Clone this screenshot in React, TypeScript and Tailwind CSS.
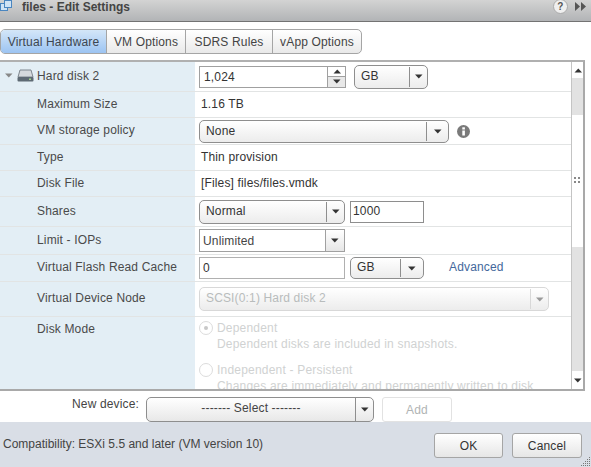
function Caret({ className = "", color = "#333" }: { className?: string; color?: string }) {
  return (
    <svg width="8" height="5" viewBox="0 0 8 5" className={className}>
      <path d="M0 0.5H7.5L3.75 4.5Z" fill={color} />
    </svg>
  );
}
function Select({ w, text, arrow, disabled, h = "h-[24px]", leading = "leading-[20px]" }: { w: string; text: string; arrow: string; disabled?: boolean; h?: string; leading?: string }) {
  return (
    <div className={`flex ${w} ${h} rounded-[5px] border ${disabled ? "border-[#d8d8d8] text-[#b8bcbc]" : "border-[#8e8e8e] text-[#333]"} bg-gradient-to-b from-white to-[#ececec]`}>
      <div className={`flex-1 min-w-0 pl-[6px] ${leading} whitespace-nowrap`}>{text}</div>
      <div className={`${arrow} my-[1px] flex items-center justify-center border-l ${disabled ? "border-[#d8d8d8]" : "border-[#8e8e8e]"}`}>
        <Caret color={disabled ? "#999" : "#333"} />
      </div>
    </div>
  );
}
function Row({ h, label, children, labelClass = "" }: { h: string; label: React.ReactNode; children?: React.ReactNode; labelClass?: string }) {
  return (
    <div className={`flex ${h} border-b border-[#e2e4e4] shrink-0`}>
      <div className={`w-[195px] shrink-0 bg-[#e3eef5] pl-[37px] text-[#4a4a4a] flex items-center ${labelClass}`}>{label}</div>
      <div className="flex-1 min-w-0 pl-[4px] flex items-center text-[#333]">{children}</div>
    </div>
  );
}
export default function App() {
  return (
    <div className="w-[591px] h-[467px] bg-white overflow-hidden flex flex-col text-[12px] leading-[14px] tracking-[0.15px]" style={{ fontFamily: '"Liberation Sans", Arial, sans-serif' }}>
      {/* Title bar */}
      <div className="h-[22px] shrink-0 flex items-center bg-gradient-to-b from-[#d3d3d3] to-[#b2b4b6] border-b border-[#737373]">
        <svg width="13" height="14" viewBox="0 0 13 14" className="mb-[8px] shrink-0">
          <rect x="0.5" y="3.5" width="7" height="7" fill="#cfe3f5" stroke="#4a86c0" />
          <rect x="4.5" y="0.5" width="7" height="7" fill="#cfe3f5" stroke="#4a86c0" />
        </svg>
        <div className="ml-[9px] mb-[8px] text-[12px] font-bold text-[#444] tracking-normal">files - Edit Settings</div>
        <div className="ml-auto mb-[8px] flex items-center mr-[4px] gap-[7px]">
          <div className="w-[15px] h-[15px] rounded-full bg-[#efefef] border border-[#aaa] text-[10px] font-bold text-[#555] flex items-center justify-center">?</div>
          <svg width="12" height="9" viewBox="0 0 12 9"><path d="M0 0L5 4.5L0 9ZM6 0L11 4.5L6 9Z" fill="#555" /></svg>
        </div>
      </div>
      {/* Tabs */}
      <div className="h-[38px] shrink-0 pt-[7px] flex">
        <div className="flex h-[25px] border border-[#a5a5a5] rounded-[5px] overflow-hidden text-[#444] bg-gradient-to-b from-white to-[#e9e9e9]">
          <div className="w-[106px] flex items-center justify-center bg-gradient-to-b from-[#d4e6f8] to-[#9cc4f2] border-r border-[#a5a5a5] text-[#3c4650]">Virtual Hardware</div>
          <div className="w-[79px] flex items-center justify-center border-r border-[#a5a5a5]">VM Options</div>
          <div className="w-[87px] flex items-center justify-center border-r border-[#a5a5a5]">SDRS Rules</div>
          <div className="w-[88px] flex items-center justify-center">vApp Options</div>
        </div>
      </div>
      {/* Panel */}
      <div className="h-[331px] shrink-0 w-[585px] border-y-2 border-r-[2px] border-[#a9a9a9] border-t-[#b0b0b0] flex box-border">
        <div className="flex-1 min-w-0 flex flex-col overflow-hidden">
          <Row
            h="h-[30px]"
            labelClass="relative pb-[1px]"
            label={
              <>
                <div className="absolute left-[5px] top-[11px] flex"><Caret color="#888" /></div>
                <div className="absolute left-[17px] top-[7px] flex">
                  <svg width="17" height="13" viewBox="0 0 17 13">
                    <path d="M3 1H14L16 8H1Z" fill="#d5d9dd" stroke="#7d868e" />
                    <rect x="0.5" y="8" width="16" height="4.5" rx="1" fill="#5e6a74" />
                    <rect x="12" y="9.5" width="2" height="1.5" fill="#9fd08a" />
                  </svg>
                </div>
                Hard disk 2
              </>
            }
          >
            <div className="flex h-[22px] w-[147px] border border-[#a0a0a0] items-center pl-[4px]">
              <span className="flex-1">1,024</span>
              <div className="w-[18px] h-full border-l border-[#a0a0a0] flex flex-col">
                <div className="flex-1 flex items-center justify-center border-b border-[#a0a0a0]"><Caret className="rotate-180" /></div>
                <div className="flex-1 flex items-center justify-center bg-[#e8e8e8]"><Caret /></div>
              </div>
            </div>
            <div className="ml-[8px]"><Select w="w-[74px]" text="GB" arrow="w-[18px]" /></div>
          </Row>
          <Row h="h-[26px]" label="Maximum Size" labelClass="pb-[2px]"><span className="ml-[2px] mb-[2px]">1.16 TB</span></Row>
          <Row h="h-[27px]" label="VM storage policy" labelClass="pb-[3px]">
            <Select w="w-[250px]" h="h-[23px]" text="None" arrow="w-[22px]" />
            <svg width="15" height="15" viewBox="0 0 15 15" className="ml-[7px]">
              <circle cx="7.5" cy="7.5" r="6.5" fill="#7a7a7a" />
              <rect x="6.3" y="6.5" width="2.6" height="5" fill="#fff" />
              <rect x="6.3" y="3.3" width="2.6" height="2.2" fill="#fff" />
            </svg>
          </Row>
          <Row h="h-[26px]" label="Type" labelClass="pb-[2px]"><span className="ml-[2px] mb-[2px]">Thin provision</span></Row>
          <Row h="h-[26px]" label="Disk File" labelClass="pb-[2px]"><span className="ml-[2px] mb-[2px]">[Files] files/files.vmdk</span></Row>
          <Row h="h-[30px]" label="Shares" labelClass="pb-[2px]">
            <Select w="w-[146px]" text="Normal" arrow="w-[18px]" />
            <div className="ml-[5px] w-[74px] h-[22px] border border-[#8e8e8e] pl-[2px] pb-[2px] flex items-center">1000</div>
          </Row>
          <Row h="h-[28px]" label="Limit - IOPs" labelClass="pb-[2px]">
            <div className="flex w-[146px] h-[23px] border border-[#a0a0a0] items-center pl-[3px]">
              <span className="flex-1 text-[#444]">Unlimited</span>
              <div className="w-[19px] h-full border-l border-[#a0a0a0] bg-gradient-to-b from-white to-[#e6e6e6] flex items-center justify-center"><Caret /></div>
            </div>
          </Row>
          <Row h="h-[27px]" label="Virtual Flash Read Cache" labelClass="pb-[3px]">
            <div className="w-[146px] h-[22px] border border-[#b0b0b0] pl-[3px] flex items-center">0</div>
            <div className="ml-[5px]"><Select w="w-[74px]" h="h-[22px]" text="GB" arrow="w-[23px]" leading="leading-[19px]" /></div>
            <span className="ml-[25px] mb-[2px] text-[#44689c]">Advanced</span>
          </Row>
          <Row h="h-[35px]" label="Virtual Device Node" labelClass="pb-[2px]">
            <Select w="w-[350px]" text="SCSI(0:1) Hard disk 2" arrow="w-[18px]" disabled />
          </Row>
          <div className="flex flex-1 min-h-0">
            <div className="w-[195px] shrink-0 bg-[#e3eef5] pl-[37px] pt-[5px] text-[#4a4a4a]">Disk Mode</div>
            <div className="flex-1 min-w-0 pl-[4px] text-[#d0d2d2] whitespace-nowrap leading-[16px] overflow-hidden tracking-[0.2px]">
              <div className="flex pt-[3px]">
                <div className="w-[14px] h-[14px] rounded-full border border-[#dcdcdc] flex items-center justify-center mt-[1px] mr-[4px] shrink-0"><div className="w-[4px] h-[4px] rounded-full bg-[#c8c8c8]" /></div>
                <div>Dependent<br />Dependent disks are included in snapshots.</div>
              </div>
              <div className="flex pt-[10px]">
                <div className="w-[14px] h-[14px] rounded-full border border-[#dcdcdc] mt-[1px] mr-[4px] shrink-0" />
                <div>Independent - Persistent<br />Changes are immediately and permanently written to disk</div>
              </div>
            </div>
          </div>
        </div>
        {/* Scrollbar */}
        <div className="w-[12px] shrink-0 border-l border-[#c4c4c4] flex flex-col bg-[#e2e2e2]">
          <div className="h-[16px] bg-white flex items-center justify-center"><Caret className="rotate-180" /></div>
          <div className="h-[37px] bg-[#e2e2e2]" />
          <div className="h-[132px] bg-white flex items-center justify-center">
            <svg width="7" height="6" viewBox="0 0 7 6" className="mt-[-2px]"><path d="M0 0h2v2H0zM4 0h2v2H4zM0 4h2v2H0zM4 4h2v2H4z" fill="#888" /></svg>
          </div>
          <div className="flex-1" />
          <div className="h-[18px] bg-white flex items-center justify-center"><Caret /></div>
        </div>
      </div>
      {/* New device */}
      <div className="h-[31px] shrink-0 flex relative">
        <span className="absolute left-[72px] top-[6px] text-[#444]">New device:</span>
        <div className="ml-[146px] mt-[6px] h-[25px] flex w-[228px] rounded-[5px] border border-[#8e8e8e] bg-gradient-to-b from-white to-[#e8e8e8] text-[#444]">
          <div className="flex-1 text-center leading-[20px]">------- Select -------</div>
          <div className="w-[18px] border-l border-[#8e8e8e] flex items-center justify-center"><Caret /></div>
        </div>
        <div className="ml-[8px] mt-[6px] h-[25px] w-[70px] rounded-[3px] border border-[#e2e2e2] text-[#b0b4b4] flex items-center justify-center">Add</div>
      </div>
      {/* Footer */}
      <div className="flex-1 bg-[#d9dee6] flex items-start relative">
        <span className="ml-[3px] mt-[15px] text-[#444] tracking-normal">Compatibility: ESXi 5.5 and later (VM version 10)</span>
        <div className="ml-auto mr-[9px] mt-[11px] flex gap-[9px]">
          <div className="w-[69px] h-[25px] rounded-[3px] border border-[#a5a5a5] bg-gradient-to-b from-white to-[#e6e6e6] flex items-center justify-center text-[#333]">OK</div>
          <div className="w-[70px] h-[25px] rounded-[3px] border border-[#a5a5a5] bg-gradient-to-b from-white to-[#e6e6e6] flex items-center justify-center text-[#333]">Cancel</div>
        </div>
        <svg width="10" height="10" viewBox="0 0 10 10" className="absolute right-0 bottom-0">
          <path d="M8 0h1v1H8zM6 2h1v1H6zM8 2h1v1H8zM4 4h1v1H4zM6 4h1v1H6zM8 4h1v1H8zM2 6h1v1H2zM4 6h1v1H4zM6 6h1v1H6zM8 6h1v1H8zM0 8h1v1H0zM2 8h1v1H2zM4 8h1v1H4zM6 8h1v1H6zM8 8h1v1H8z" fill="#777" />
        </svg>
      </div>
    </div>
  );
}
